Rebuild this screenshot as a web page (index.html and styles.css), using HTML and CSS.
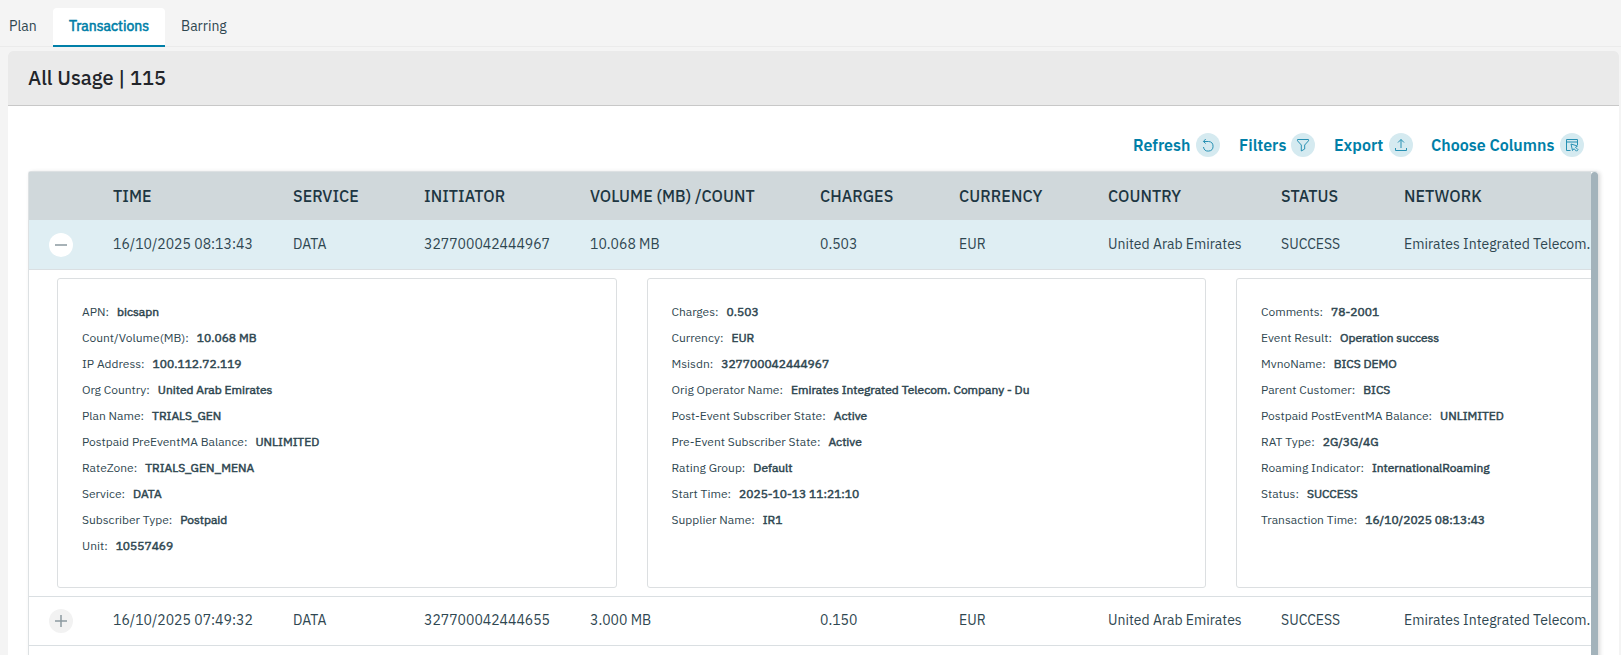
FILE: index.html
```html
<!DOCTYPE html>
<html lang="en">
<head>
    <meta charset="UTF-8">
    <meta name="viewport" content="width=device-width, initial-scale=1.0">
    <title>Transactions</title>
    <link rel="stylesheet" href="styles.css">
</head>
<body>
    <nav class="tabs">
        <a class="tab">Plan</a>
        <a class="tab active">Transactions</a>
        <a class="tab">Barring</a>
    </nav>

    <section class="panel">
        <h2 class="panel-title">All Usage | 115</h2>

        <div class="toolbar">
            <button class="action refresh"><span>Refresh</span>
                <svg class="icon" viewBox="0 0 24 24"><path d="M7.500 8.500H12.500a4.800 4.800 0 1 1-5 5.500M9.700 6l-2.300 2.500 2.300 2"/></svg>
            </button>
            <button class="action filters"><span>Filters</span>
                <svg class="icon" viewBox="0 0 24 24"><path d="M6.500 6.500h11v1.300L13.700 12v4l-3.400 2v-6L6.500 7.800z"/></svg>
            </button>
            <button class="action export"><span>Export</span>
                <svg class="icon" viewBox="0 0 24 24"><path d="M12 15V6.500M9 9.500l3-3 3 3M6.500 15v2.500h11V15"/></svg>
            </button>
            <button class="action columns"><span>Choose Columns</span>
                <svg class="icon" viewBox="0 0 24 24"><path d="M10.500 17.500h-4v-11h11V12M6.500 9h11M11 11l1.500 6.500 1.500-1.800 2.500 2.500 1.500-1.500-2.500-2.500 2-1.200z"/></svg>
            </button>
        </div>

        <div class="table-wrap">
            <div class="table">
                <div class="row head">
                    <span></span>
                    <span>TIME</span>
                    <span>SERVICE</span>
                    <span>INITIATOR</span>
                    <span>VOLUME (MB) /COUNT</span>
                    <span>CHARGES</span>
                    <span>CURRENCY</span>
                    <span>COUNTRY</span>
                    <span>STATUS</span>
                    <span>NETWORK</span>
                </div>
                <div class="row open">
                    <span class="toggle"><svg viewBox="0 0 24 24"><path d="M6 12h12"/></svg></span>
                    <span>16/10/2025 08:13:43</span>
                    <span>DATA</span>
                    <span>327700042444967</span>
                    <span>10.068 MB</span>
                    <span>0.503</span>
                    <span>EUR</span>
                    <span>United Arab Emirates</span>
                    <span>SUCCESS</span>
                    <span>Emirates Integrated Telecom.</span>
                </div>
                <div class="details">
                    <dl class="card">
                        <div><dt>APN:</dt><dd>bicsapn</dd></div>
                        <div><dt>Count/Volume(MB):</dt><dd>10.068 MB</dd></div>
                        <div><dt>IP Address:</dt><dd>100.112.72.119</dd></div>
                        <div><dt>Org Country:</dt><dd>United Arab Emirates</dd></div>
                        <div><dt>Plan Name:</dt><dd>TRIALS_GEN</dd></div>
                        <div><dt>Postpaid PreEventMA Balance:</dt><dd>UNLIMITED</dd></div>
                        <div><dt>RateZone:</dt><dd>TRIALS_GEN_MENA</dd></div>
                        <div><dt>Service:</dt><dd>DATA</dd></div>
                        <div><dt>Subscriber Type:</dt><dd>Postpaid</dd></div>
                        <div><dt>Unit:</dt><dd>10557469</dd></div>
                    </dl>
                    <dl class="card">
                        <div><dt>Charges:</dt><dd>0.503</dd></div>
                        <div><dt>Currency:</dt><dd>EUR</dd></div>
                        <div><dt>Msisdn:</dt><dd>327700042444967</dd></div>
                        <div><dt>Orig Operator Name:</dt><dd>Emirates Integrated Telecom. Company - Du</dd></div>
                        <div><dt>Post-Event Subscriber State:</dt><dd>Active</dd></div>
                        <div><dt>Pre-Event Subscriber State:</dt><dd>Active</dd></div>
                        <div><dt>Rating Group:</dt><dd>Default</dd></div>
                        <div><dt>Start Time:</dt><dd>2025-10-13 11:21:10</dd></div>
                        <div><dt>Supplier Name:</dt><dd>IR1</dd></div>
                    </dl>
                    <dl class="card">
                        <div><dt>Comments:</dt><dd>78-2001</dd></div>
                        <div><dt>Event Result:</dt><dd>Operation success</dd></div>
                        <div><dt>MvnoName:</dt><dd>BICS DEMO</dd></div>
                        <div><dt>Parent Customer:</dt><dd>BICS</dd></div>
                        <div><dt>Postpaid PostEventMA Balance:</dt><dd>UNLIMITED</dd></div>
                        <div><dt>RAT Type:</dt><dd>2G/3G/4G</dd></div>
                        <div><dt>Roaming Indicator:</dt><dd>InternationalRoaming</dd></div>
                        <div><dt>Status:</dt><dd>SUCCESS</dd></div>
                        <div><dt>Transaction Time:</dt><dd>16/10/2025 08:13:43</dd></div>
                    </dl>
                </div>
                <div class="row">
                    <span class="toggle"><svg viewBox="0 0 24 24"><path d="M6 12h12M12 6v12"/></svg></span>
                    <span>16/10/2025 07:49:32</span>
                    <span>DATA</span>
                    <span>327700042444655</span>
                    <span>3.000 MB</span>
                    <span>0.150</span>
                    <span>EUR</span>
                    <span>United Arab Emirates</span>
                    <span>SUCCESS</span>
                    <span>Emirates Integrated Telecom.</span>
                </div>
            </div>
            <div class="scrollbar"></div>
        </div>
    </section>
</body>
</html>
```
FILE: styles.css
```css
* {
    box-sizing: border-box;
}
body {
    margin: 0;
    height: 655px;
    overflow: hidden;
    background-color: #f4f4f4;
    color: #2f4751;
    font-family: "IBM Plex Sans", Roboto, sans-serif;
    font-size: 14px;
}
.tabs {
    display: flex;
    height: 47px;
    padding-top: 8px;
    border-bottom: 1px solid #ebebeb;
}
.tab {
    height: 39px;
    padding: 0 16px;
    line-height: 36px;
}
.tab:first-child {
    width: 53px;
    padding: 0 0 0 9px;
}
.tab.active {
    width: 112px;
    padding: 0;
    text-align: center;
    background-color: #fff;
    border-bottom: 2px solid #007fa8;
    border-radius: 4px 4px 0 0;
    color: #007fa8;
    -webkit-text-stroke: 0.6px #007fa8;
}
.panel {
    margin: 4px 2px 0 8px;
    height: 604px;
    background-color: #fff;
    border-radius: 5px 5px 0 0;
    overflow: hidden;
}
.panel-title {
    margin: 0;
    height: 55px;
    padding-left: 20px;
    background-color: #eaeaea;
    border-bottom: 1px solid #c8c8c8;
    color: #22252a;
    font-size: 20px;
    font-weight: 500;
    line-height: 54px;
}
.toolbar {
    display: flex;
    justify-content: flex-end;
    gap: 19px;
    height: 65px;
    padding: 27px 35px 0 0;
}
.action {
    display: flex;
    justify-content: space-between;
    height: 24px;
    padding: 0;
    border: none;
    background: none;
    color: #007fa8;
    font-family: inherit;
    font-size: 16px;
    font-weight: 600;
    line-height: 25px;
    white-space: nowrap;
    cursor: pointer;
}
.refresh {
    width: 87px;
}
.filters {
    width: 76px;
}
.export {
    width: 79px;
}
.columns {
    width: 153px;
    margin-left: -1px;
}
.icon {
    width: 24px;
    height: 24px;
    border-radius: 50%;
    background-color: #d5eaf0;
    fill: none;
    stroke: #2690b3;
    stroke-width: 1;
}
.table-wrap {
    display: flex;
    width: 1570px;
    height: 500px;
    margin-left: 20px;
    border: 1px solid #dde1e3;
    border-right: none;
    border-radius: 3px;
    box-shadow: 2px 1px 4px rgba(0, 0, 0, 0.15);
}
.table {
    flex: 1;
    overflow: hidden;
}
.scrollbar {
    width: 7px;
    border-radius: 4px;
    background-color: #a3b3bb;
}
.row {
    display: grid;
    grid-template-columns: 84px 180px 131px 166px 230px 139px 149px 173px 123px 187px;
    align-items: center;
    height: 49px;
    padding-bottom: 2px;
    border-bottom: 1px solid #dadfe2;
    line-height: 18px;
    white-space: nowrap;
}
.row.head {
    height: 48px;
    padding-bottom: 0;
    border-bottom: none;
    background-color: #d0d8db;
    color: #1d3642;
    font-size: 16px;
    font-weight: 500;
    line-height: 20px;
    letter-spacing: 0.07px;
}
.row.open {
    height: 50px;
    padding-top: 1px;
    background-color: #dfeef3;
}
.toggle {
    width: 24px;
    height: 24px;
    margin: 2px 0 0 20px;
    border-radius: 50%;
    background-color: #f2f2f2;
}
.toggle svg {
    display: block;
    fill: none;
    stroke: #8d9ba1;
    stroke-width: 1.5;
}
.open .toggle {
    background-color: #fff;
}
.open .toggle svg {
    stroke: #a7b2b7;
    stroke-width: 2;
}
.details {
    display: grid;
    grid-template-columns: repeat(3, 559.5px);
    gap: 30px;
    height: 327px;
    padding: 8px 0 8px 28px;
    border-bottom: 1px solid #dadfe2;
}
.card {
    margin: 0;
    padding: 20px 24px;
    border: 1px solid #dcdfe1;
    border-radius: 3px;
    font-size: 12px;
}
.card div {
    display: flex;
    gap: 8px;
    height: 26px;
    line-height: 26px;
    white-space: nowrap;
}
.card dd {
    margin: 0;
    -webkit-text-stroke: 0.5px #2f4751;
}
```
